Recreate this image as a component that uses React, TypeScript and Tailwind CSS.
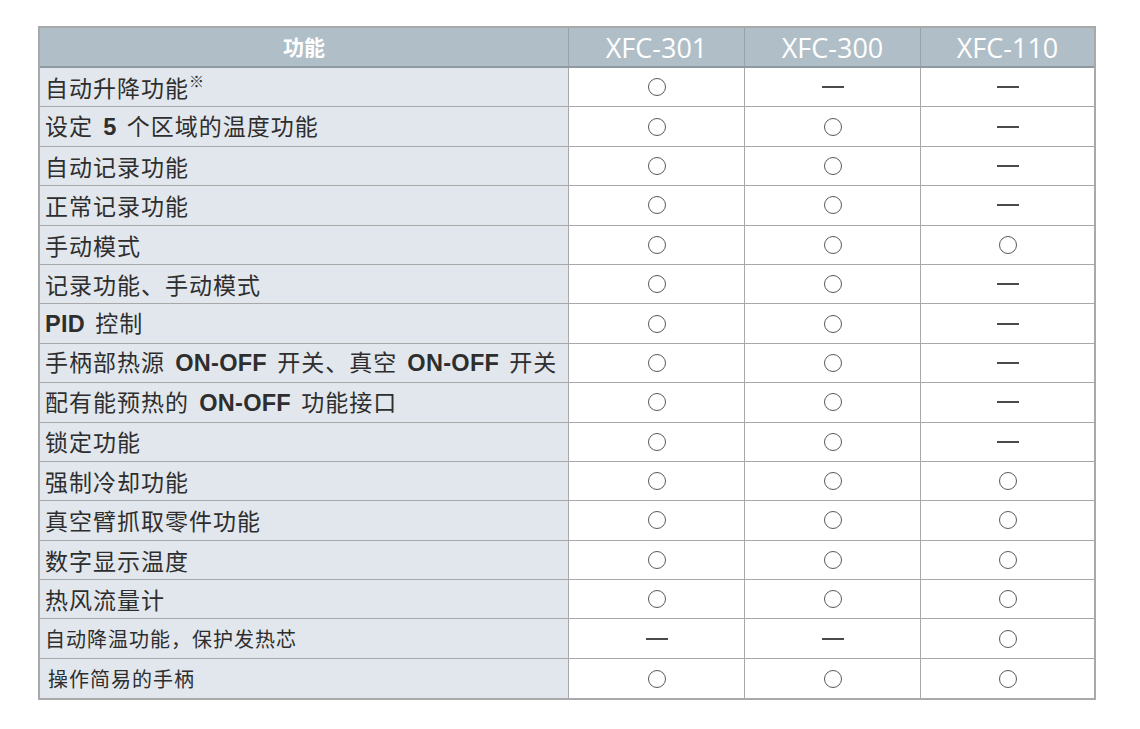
import React from 'react';

type Mark = 'o' | '-';

const rows: { label: React.ReactNode; small?: boolean; indent?: boolean; marks: Mark[] }[] = [
    { label: <>自动升降功能<span className="align-top text-[15px]">※</span></>, marks: ['o', '-', '-'] },
    { label: <>设定 <b>5</b> 个区域的温度功能</>, marks: ['o', 'o', '-'] },
    { label: '自动记录功能', marks: ['o', 'o', '-'] },
    { label: '正常记录功能', marks: ['o', 'o', '-'] },
    { label: '手动模式', marks: ['o', 'o', 'o'] },
    { label: '记录功能、手动模式', marks: ['o', 'o', '-'] },
    { label: <><b>PID</b> 控制</>, marks: ['o', 'o', '-'] },
    { label: <>手柄部热源 <b>ON-OFF</b> 开关、真空 <b>ON-OFF</b> 开关</>, marks: ['o', 'o', '-'] },
    { label: <>配有能预热的 <b>ON-OFF</b> 功能接口</>, marks: ['o', 'o', '-'] },
    { label: '锁定功能', marks: ['o', 'o', '-'] },
    { label: '强制冷却功能', marks: ['o', 'o', 'o'] },
    { label: '真空臂抓取零件功能', marks: ['o', 'o', 'o'] },
    { label: '数字显示温度', marks: ['o', 'o', 'o'] },
    { label: '热风流量计', marks: ['o', 'o', 'o'] },
    { label: '自动降温功能，保护发热芯', small: true, marks: ['-', '-', 'o'] },
    { label: '操作简易的手柄', small: true, indent: true, marks: ['o', 'o', 'o'] },
];

const Cell = ({ mark }: { mark: Mark }) => (
    <div className="flex items-center justify-center border-l border-[#a8a8a8]">
        {mark === 'o' ? (
            <span className="block w-[18px] h-[18px] rounded-full border border-[#5a5a5a]" />
        ) : (
            <span className="block w-[22px] h-[2px] bg-[#4a4a4a]" />
        )}
    </div>
);

export default function App() {
    return (
        <div
            className="w-[1140px] h-[729px] bg-white pt-[26px] pl-[38px]"
            style={{ fontFamily: '"Noto Sans CJK SC", "Noto Sans", sans-serif' }}
        >
            <div className="w-[1058px] border-2 border-[#a9a9a9]">
                {/* header */}
                <div className="grid grid-cols-[528px_176px_176px_1fr] h-[40px] bg-[#afbec7] text-white border-b-2 border-[#8f9aa0]">
                    <div className="flex items-center justify-center text-[21px] font-bold">功能</div>
                    {['XFC-301', 'XFC-300', 'XFC-110'].map((m) => (
                        <div
                            key={m}
                            className="flex items-center justify-center border-l border-[#98a3a9] text-[27px] font-medium leading-none"
                            style={{ fontFamily: '"Open Sans", sans-serif' }}
                        >
                            {m}
                        </div>
                    ))}
                </div>

                {rows.map((r, i) => (
                    <div
                        key={i}
                        className={`grid grid-cols-[528px_176px_176px_1fr] h-[39.4px] ${i < rows.length - 1 ? 'border-b border-[#a8a8a8]' : ''}`}
                    >
                        <div
                            className={`flex items-center bg-[#e2e7ed] text-[#2e2e2e] whitespace-nowrap [word-spacing:4px] ${r.small ? 'text-[20px] tracking-[1px]' : 'text-[23px] tracking-[1px]'} ${r.indent ? 'pl-[8px]' : 'pl-[5px]'}`}
                        >
                            <span className="[&_b]:font-bold [&_b]:text-[23.5px] [&_b]:tracking-[0.3px] [&_b]:font-['Liberation_Sans']">{r.label}</span>
                        </div>
                        {r.marks.map((m, j) => (
                            <Cell key={j} mark={m} />
                        ))}
                    </div>
                ))}
            </div>
        </div>
    );
}
